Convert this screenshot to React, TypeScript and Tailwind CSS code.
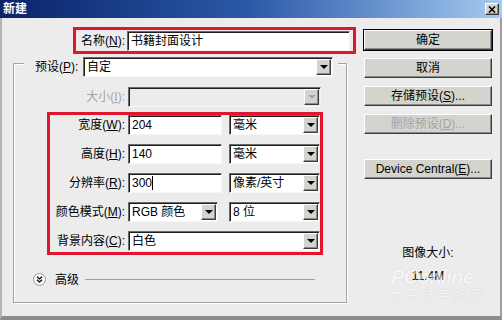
import type { ReactNode } from 'react'

const sunken =
  'border border-t-[#6a6a6a] border-l-[#6a6a6a] border-r-[#f6f6f6] border-b-[#f6f6f6] shadow-[inset_1px_1px_0_#1e1e1e]'
const raised =
  'border border-t-white border-l-white border-r-[#3c3c3c] border-b-[#3c3c3c] shadow-[inset_-1px_-1px_0_#8a8a8a]'

function U({ children }: { children: ReactNode }) {
  return <span className="underline underline-offset-1">{children}</span>
}

function Arrow({ disabled }: { disabled?: boolean }) {
  return (
    <div className={`w-[15px] h-full flex items-center justify-center bg-[#d4d4ce] ${raised}`}>
      <div
        className={`w-0 h-0 border-l-[4px] border-r-[4px] border-t-[4px] border-l-transparent border-r-transparent ${
          disabled ? 'border-t-[#a8a8a8]' : 'border-t-black'
        }`}
      />
    </div>
  )
}

function Select({ value, className, disabled }: { value?: string; className: string; disabled?: boolean }) {
  return (
    <div className={`h-[20px] flex items-stretch ${disabled ? 'bg-[#ececec]' : 'bg-white'} ${sunken} ${className}`}>
      <span className="flex-1 pl-[3px] pt-px leading-[17px] whitespace-nowrap overflow-hidden">{value}</span>
      <div className="p-px">
        <Arrow disabled={disabled} />
      </div>
    </div>
  )
}

function Input({ value, className, caret }: { value: string; className: string; caret?: boolean }) {
  return (
    <div className={`h-[20px] bg-white flex items-center pl-[3px] ${sunken} ${className}`}>
      {value}
      {caret && <span className="w-px h-[14px] bg-black" />}
    </div>
  )
}

function Button({ children, def, disabled, className = '' }: { children: ReactNode; def?: boolean; disabled?: boolean; className?: string }) {
  return (
    <div
      className={`h-[20px] flex items-center justify-center bg-[#d4d4ce] ${raised} ${
        def ? 'outline outline-1 outline-black' : ''
      } ${disabled ? 'text-[#a4a4a4]' : 'text-black'} ${className}`}
    >
      {children}
    </div>
  )
}

function Row({ label, children }: { label: ReactNode; children: ReactNode }) {
  return (
    <div className="h-[20px] flex items-center">
      <div className="w-[75px] text-right whitespace-nowrap">{label}</div>
      <div className="ml-[3px] flex gap-[7px]">{children}</div>
    </div>
  )
}

export default function App() {
  return (
    <div className="w-[502px] h-[320px] relative overflow-hidden flex flex-col bg-[#ececec] text-[12px] text-black font-['Liberation_Sans','Noto_Sans_CJK_SC',sans-serif]">
      {/* title bar */}
      <div className="h-[18px] shrink-0 flex items-center justify-between px-[3px] bg-linear-to-r from-[#0a246a] via-[#2c5aa8] to-[#a6caf0]">
        <span className="text-white font-bold leading-none">新建</span>
        <div className={`w-[14px] h-[12px] flex items-center justify-center bg-[#d4d4ce] ${raised}`}>
          <svg width="8" height="7" viewBox="0 0 8 7">
            <path d="M1 0.5 L7 6.5 M7 0.5 L1 6.5" stroke="black" strokeWidth="1.6" />
          </svg>
        </div>
      </div>

      <div className="flex-1 flex border-l-2 border-r-2 border-b-[4px] border-l-[#b4b4b4] border-r-[#9c9c9c] border-b-[#8c8c8c]">
        {/* left column */}
        <div className="w-[358px] flex flex-col">
          <div className="mt-[9px] ml-[71px] w-[283px] h-[27px] border-[3px] border-[#e2152f] flex items-center">
            <div className="w-[49px] text-right whitespace-nowrap">
              名称(<U>N</U>):
            </div>
            <Input value="书籍封面设计" className="ml-[2px] w-[223px]" />
          </div>

          <div className="mt-[9px] ml-[11px] w-[334px] h-[240px] border border-[#a4a4a4] shadow-[1px_1px_0_#fff,inset_1px_1px_0_#fff] flex flex-col">
            <div className="-mt-[7px] ml-[10px] mr-[8px] h-[20px] bg-[#ececec] flex items-center pl-[11px] pr-[5px]">
              <span className="whitespace-nowrap">
                预设(<U>P</U>):
              </span>
              <Select value="自定" className="ml-auto w-[250px]" />
            </div>

            <div className="mt-[10px] h-[20px] flex items-center">
              <div className="w-[111px] text-right text-[#a4a4a4] whitespace-nowrap">
                大小(<U>I</U>):
              </div>
              <Select disabled className="ml-[3px] w-[193px]" />
            </div>

            <div className="mt-[5px] ml-[33px] w-[276px] h-[143px] border-[3px] border-[#e2152f] flex flex-col gap-[9px]">
              <Row label={<>宽度(<U>W</U>):</>}>
                <Input value="204" className="w-[94px]" />
                <Select value="毫米" className="w-[91px]" />
              </Row>
              <Row label={<>高度(<U>H</U>):</>}>
                <Input value="140" className="w-[94px]" />
                <Select value="毫米" className="w-[91px]" />
              </Row>
              <Row label={<>分辨率(<U>R</U>):</>}>
                <Input value="300" caret className="w-[94px]" />
                <Select value="像素/英寸" className="w-[91px]" />
              </Row>
              <Row label={<>颜色模式(<U>M</U>):</>}>
                <Select value="RGB 颜色" className="w-[90px]" />
                <Select value="8 位" className="ml-[4px] w-[91px]" />
              </Row>
              <Row label={<>背景内容(<U>C</U>):</>}>
                <Select value="白色" className="w-[192px]" />
              </Row>
            </div>

            <div className="mt-[18px] h-[13px] flex items-center pl-[19px]">
              <div className="w-[13px] h-[13px] rounded-full bg-[#f8f8f8] border border-[#9a9a9a] flex items-center justify-center">
                <svg width="7" height="7" viewBox="0 0 7 7">
                  <path d="M1 0.8 L3.5 3 L6 0.8 M1 3.8 L3.5 6 L6 3.8" stroke="black" strokeWidth="1.3" fill="none" />
                </svg>
              </div>
              <span className="ml-[9px] leading-none">高级</span>
              <div className="ml-[6px] w-[230px] h-px bg-[#a0a0a0]" />
            </div>
          </div>
        </div>

        {/* right column */}
        <div className="ml-[4px] w-[128px] flex flex-col">
          <Button def className="mt-[12px]">确定</Button>
          <Button className="mt-[8px]">取消</Button>
          <Button className="mt-[8px]">
            存储预设(<U>S</U>)...
          </Button>
          <Button disabled className="mt-[8px]">
            删除预设(<U>D</U>)...
          </Button>
          <Button className="mt-[25px]">
            Device Central(<U>E</U>)...
          </Button>
          <div className="mt-[67px] text-center leading-[14px]">图像大小:</div>
          <div className="mt-[9px] text-center leading-[14px]">11.4M</div>
        </div>
      </div>

      {/* watermark */}
      <div className="absolute left-[391px] top-[266px] pointer-events-none opacity-50 flex flex-col items-start">
        <span className="text-[20px] leading-[22px] font-bold italic tracking-[-0.5px] text-white [text-shadow:0_0_1px_#a8a8a8]">
          PConline
        </span>
        <span className="text-[13px] leading-[14px] tracking-[3px] text-white [text-shadow:0_0_1px_#a8a8a8]">
          太平洋电脑网
        </span>
      </div>
    </div>
  )
}
